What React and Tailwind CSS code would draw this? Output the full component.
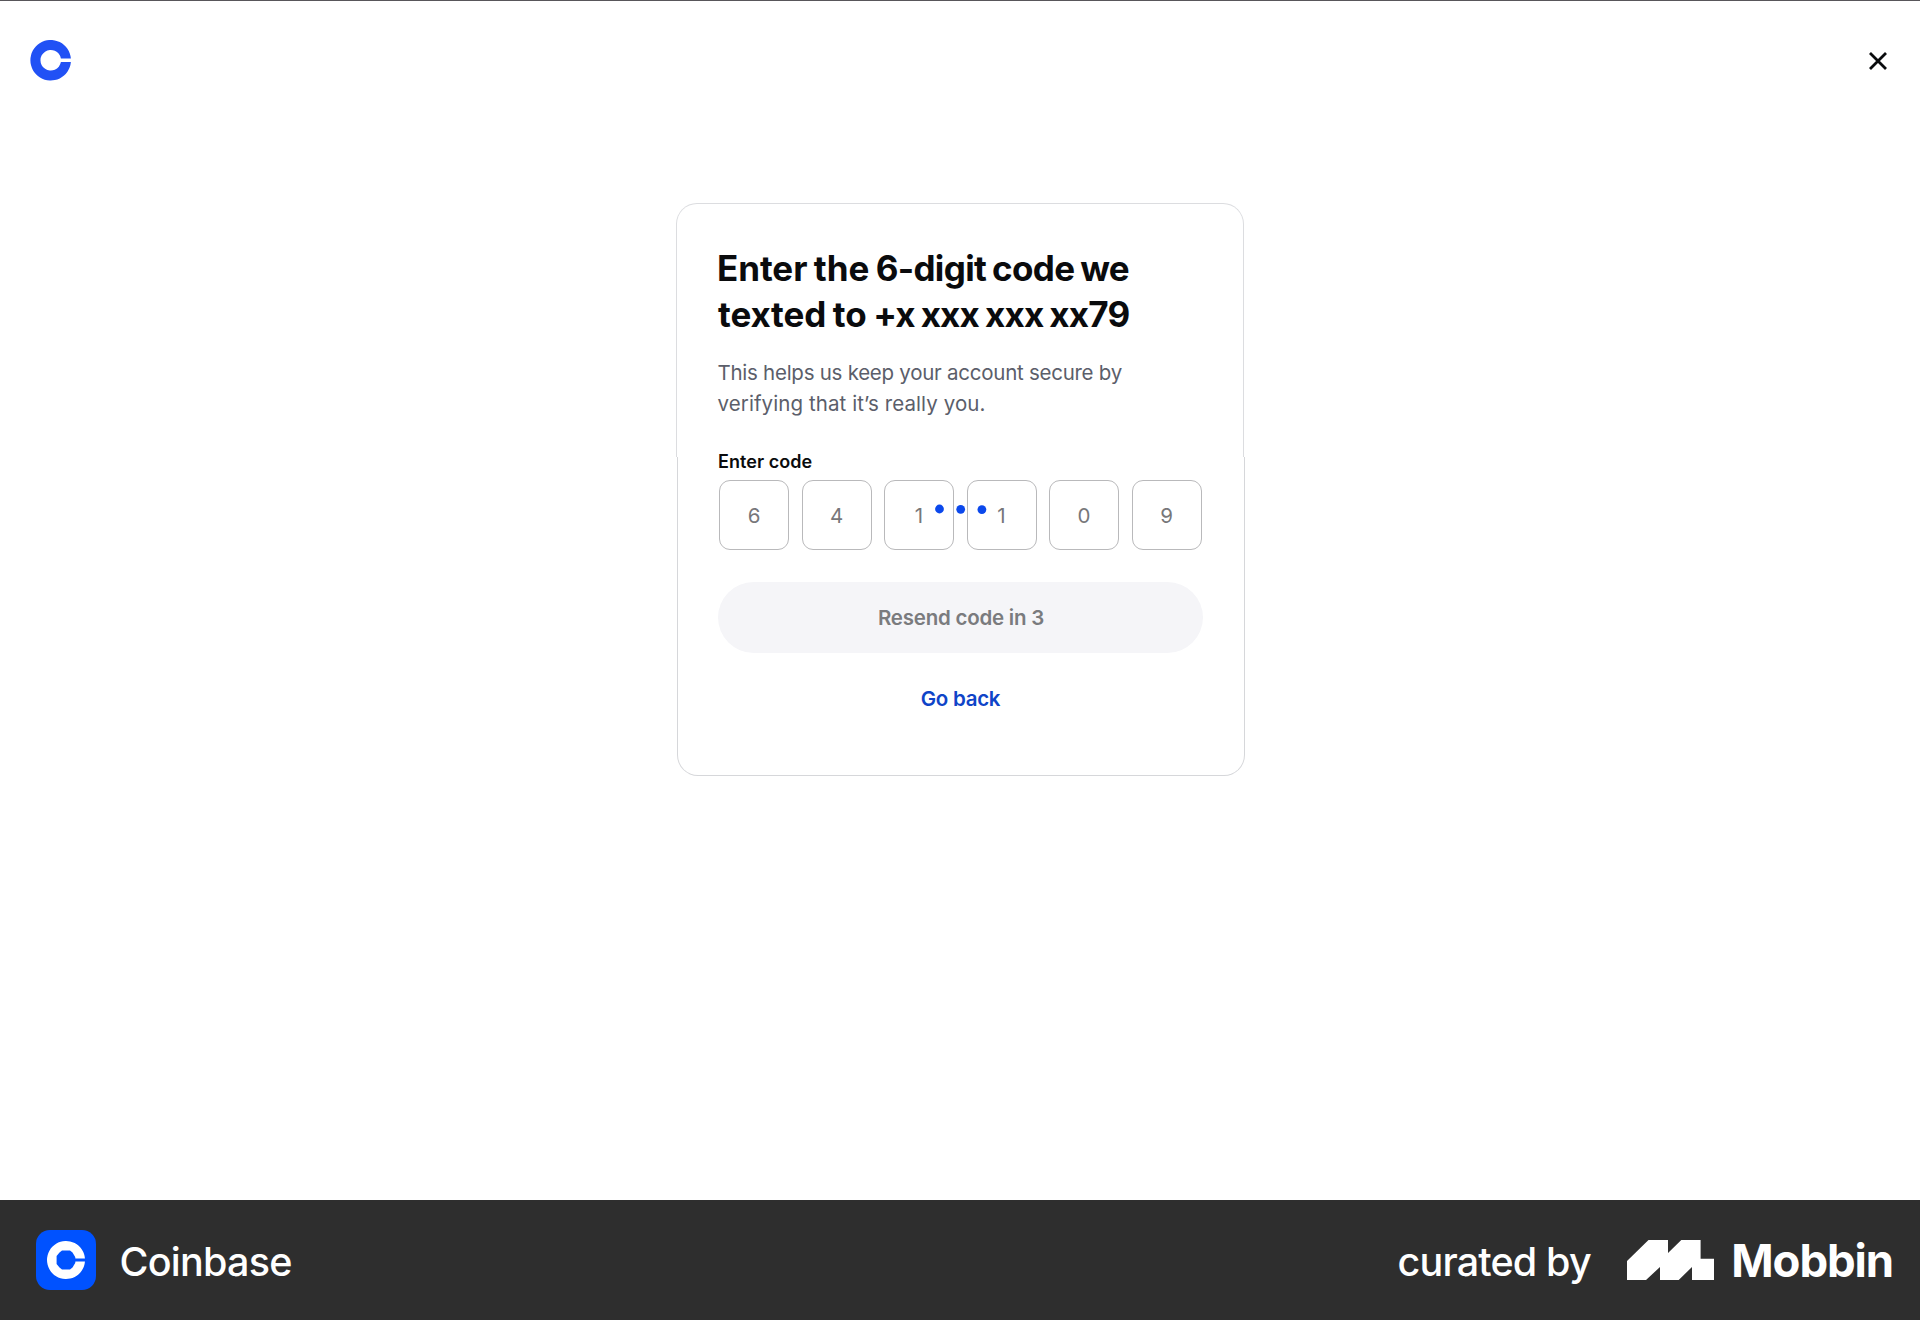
const digits = ["6", "4", "1", "1", "0", "9"];

function CoinMark({ className }) {
  return (
    <svg viewBox="0 0 40 40" className={className} aria-hidden="true">
      <path
        fill="currentColor"
        fillRule="evenodd"
        d="M39.93 18.2A20 20 0 1 0 39.93 21.8L30 21.8A10.2 10.2 0 1 1 30 18.2Z"
      />
    </svg>
  );
}

function TopBar() {
  return (
    <header className="flex h-[120px] items-center justify-between border-t border-[#58565a] pr-[30px] pl-[30px]">
      <svg viewBox="0 0 42 42" className="mt-px h-[42px] w-[42px] text-[#2151f5]" aria-hidden="true">
        <path
          fill="currentColor"
          d="M40.9 18.4A20.3 20.3 0 1 0 40.9 22.1L30.9 22.1A10.3 10.3 0 1 1 30.9 18.4Z"
        />
      </svg>
      <button type="button" aria-label="Close" className="flex h-6 w-6 items-center justify-center">
        <svg viewBox="0 0 24 24" className="h-6 w-6" aria-hidden="true">
          <path d="M4 4L20 20M20 4L4 20" stroke="#0a0b0d" strokeWidth="2.8" fill="none" />
        </svg>
      </button>
    </header>
  );
}

function CodeInputs() {
  return (
    <div className="relative mt-[6px] flex gap-[12.5px] pl-px">
      {digits.map((d, i) => (
        <div
          key={i}
          className="flex h-[70px] w-[70px] items-center justify-center rounded-[11px] border border-[#b9b9bb] pt-[3px] text-[20.5px] text-[#77777a]"
        >
          {d}
        </div>
      ))}
      <svg viewBox="0 0 60 12" className="absolute top-[23px] left-[213px] h-3 w-[60px]" aria-hidden="true">
        <g fill="#0b48ec">
          <circle cx="8.5" cy="6" r="4.4" />
          <circle cx="29.7" cy="6.3" r="4.4" />
          <circle cx="50.9" cy="6.6" r="4.4" />
        </g>
      </svg>
    </div>
  );
}

function VerifyCard() {
  return (
    <section className="relative ml-[676px] h-[573px] w-[569px] pt-[42px] pr-[42px] pl-[42px]">
      <div className="pointer-events-none absolute top-0 left-0 h-[254px] w-[568px] rounded-t-[21px] border border-b-0 border-[#dcdde0]" />
      <div className="pointer-events-none absolute bottom-0 left-px h-[319px] w-[568px] rounded-b-[21px] border border-t-0 border-[#d6d7da]" />
      <h1 className="text-[35px] leading-[46px] font-bold whitespace-nowrap text-[#0a0b0d]">
        <span className="-ml-px block tracking-[-0.65px] [word-spacing:-1.8px]">
          <span className="tracking-[-0.05px]">Enter the </span>6-digit code we
        </span>
        <span className="block tracking-[-0.82px] [word-spacing:-1.6px]">
          <span className="tracking-[-0.1px]">texted to </span>+x xxx xxx xx79
        </span>
      </h1>
      <p className="mt-[21px] -ml-[0.5px] text-[20.5px] leading-[30.5px] whitespace-nowrap text-[#5b5e6a]">
        <span className="block tracking-[-0.26px]">This helps us keep your account secure by</span>
        <span className="block tracking-[0.09px]">verifying that it’s really you.</span>
      </p>
      <p className="mt-[30.5px] text-[18px] leading-6 font-semibold tracking-[0.05px] text-[#0a0b0d]">Enter code</p>
      <CodeInputs />
      <button
        type="button"
        className="mt-[32.5px] flex h-[70.5px] w-[485px] items-center justify-center rounded-full bg-[#f5f5f8] pt-[2px] pl-px text-[20.5px] font-semibold tracking-[-0.22px] text-[#7a7b7e]"
      >
        Resend code in 3
      </button>
      <button
        type="button"
        className="mt-[31px] block h-[30px] w-[485px] text-center text-[20.5px] leading-[30px] font-semibold tracking-[-0.28px] text-[#0f44c8]"
      >
        Go back
      </button>
    </section>
  );
}

function Footer() {
  return (
    <footer className="flex h-[120px] items-center bg-[#2e2e2e] pr-[27px] pl-9 text-white">
      <div className="flex h-[60px] w-[60px] items-center justify-center rounded-[14px] bg-[#0052ff]">
        <CoinbaseGlyph />
      </div>
      <span className="mt-[3px] ml-[23.5px] text-[39.5px] leading-[48px] font-medium tracking-[-0.77px]">Coinbase</span>
      <div className="ml-auto flex items-center">
        <span className="mt-[3px] text-[39.5px] leading-[48px] font-medium tracking-[-0.85px]">curated by</span>
        <svg viewBox="0 0 87 40" className="ml-[36.5px] h-10 w-[87px]" aria-hidden="true">
          <path
            fill="currentColor"
            d="M0 40V21L21.5 0H41V13L54.3 0H73.6V18.7H87V40H65V27L51.7 40H33V27L19 40Z"
          />
        </svg>
        <span className="mt-px ml-[17px] text-[45.5px] leading-[48px] font-bold tracking-[-1.1px]">Mobbin</span>
      </div>
    </footer>
  );
}

function CoinbaseGlyph() {
  return (
    <svg viewBox="0 0 38 38" className="h-[38px] w-[38px]" aria-hidden="true">
      <path
        fill="currentColor"
        d="M37.95 17.6A19 19 0 1 0 37.95 20.4L28.4 20.4L28.2 22L25.5 26.5L23 28.4L15 28.4L12.5 26.5L9.6 23L9.6 15L12.5 11.5L15 9.6L23 9.6L25.5 11.5L28.2 16L28.4 17.6Z"
      />
    </svg>
  );
}

export default function App() {
  return (
    <div className="flex h-[1320px] w-[1920px] flex-col overflow-hidden bg-white font-['Inter',sans-serif]">
      <TopBar />
      <main className="flex-1 pt-[83px]">
        <VerifyCard />
      </main>
      <Footer />
    </div>
  );
}
